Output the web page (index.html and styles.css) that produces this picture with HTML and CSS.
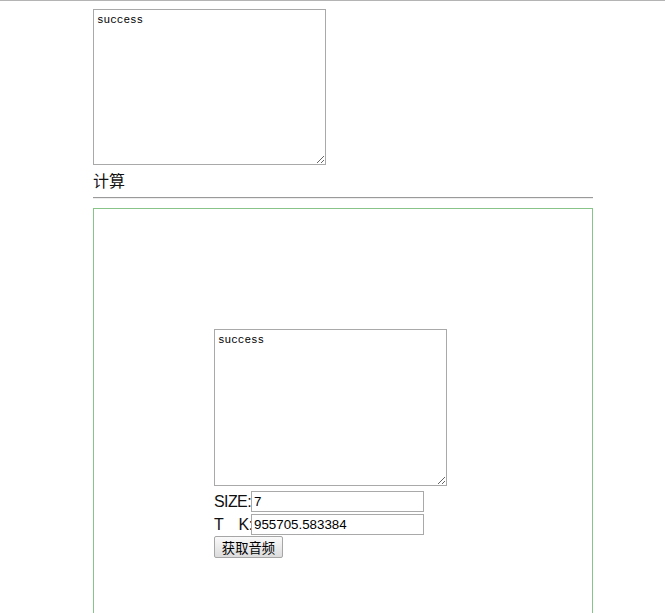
FILE: index.html
```html
<!DOCTYPE html>
<html lang="zh-CN">
<head>
    <meta charset="UTF-8">
    <title>计算</title>
    <link rel="stylesheet" href="styles.css">
</head>
<body>
    <div class="page">
        <textarea class="log">success</textarea>
        <div class="title">计算</div>
        <hr class="rule">

        <div class="panel">
            <textarea class="log">success</textarea>
            <div class="row">
                <label class="label">SIZE:</label><input class="field" type="text" value="7">
            </div>
            <div class="row">
                <label class="label">T&nbsp;&nbsp;&nbsp;&nbsp;K:</label><input class="field" type="text" value="955705.583384">
            </div>
            <button class="btn" type="button">获取音频</button>
        </div>
    </div>
</body>
</html>
```

FILE: styles.css
```css
* {
    box-sizing: border-box;
}

body {
    margin: 0;
    border-top: 1px solid #b4b4b4;
    font-family: "Liberation Sans", "Noto Sans CJK SC", sans-serif;
    color: #111;
    overflow: hidden;
}

.page {
    width: 500px;
    margin-left: 93px;
    padding-top: 8px;
}

.log {
    display: block;
    width: 233px;
    height: 156px;
    margin: 0;
    padding: 3px 3px;
    border: 1px solid #a9a9a9;
    font-family: "Liberation Mono", monospace;
    font-size: 11px;
    line-height: 14px;
    color: #000;
    resize: both;
}

.title {
    margin-top: 4px;
    font-family: "Noto Sans CJK SC", sans-serif;
    font-size: 16px;
    line-height: 22px;
}

.rule {
    margin: 6px 0 9px;
    height: 0;
    border: 0;
    border-top: 1px solid #9a9a9a;
    border-bottom: 1px solid #eeeeee;
}

.panel {
    width: 500px;
    height: 480px;
    padding: 120px;
    border: 1px solid #88c488;
}

.panel .log {
    height: 157px;
}

.row {
    display: flex;
    align-items: center;
    height: 23px;
}

.row:first-of-type {
    margin-top: 4px;
}

.label {
    width: 37px;
    font-size: 16px;
    white-space: nowrap;
    letter-spacing: -0.6px;
}

.field {
    width: 173px;
    height: 21px;
    margin: 0;
    padding: 1px 2px;
    border: 1px solid #a9a9a9;
    font-family: "Liberation Sans", sans-serif;
    font-size: 13.33px;
    color: #000;
}

.btn {
    display: block;
    width: 69px;
    height: 22px;
    margin-top: 0;
    padding: 0;
    border: 1px solid #a6a6a6;
    border-radius: 2px;
    background: linear-gradient(#fafafa, #dcdcdc);
    font-family: "Noto Sans CJK SC", sans-serif;
    font-size: 13.33px;
    color: #000;
}
```
